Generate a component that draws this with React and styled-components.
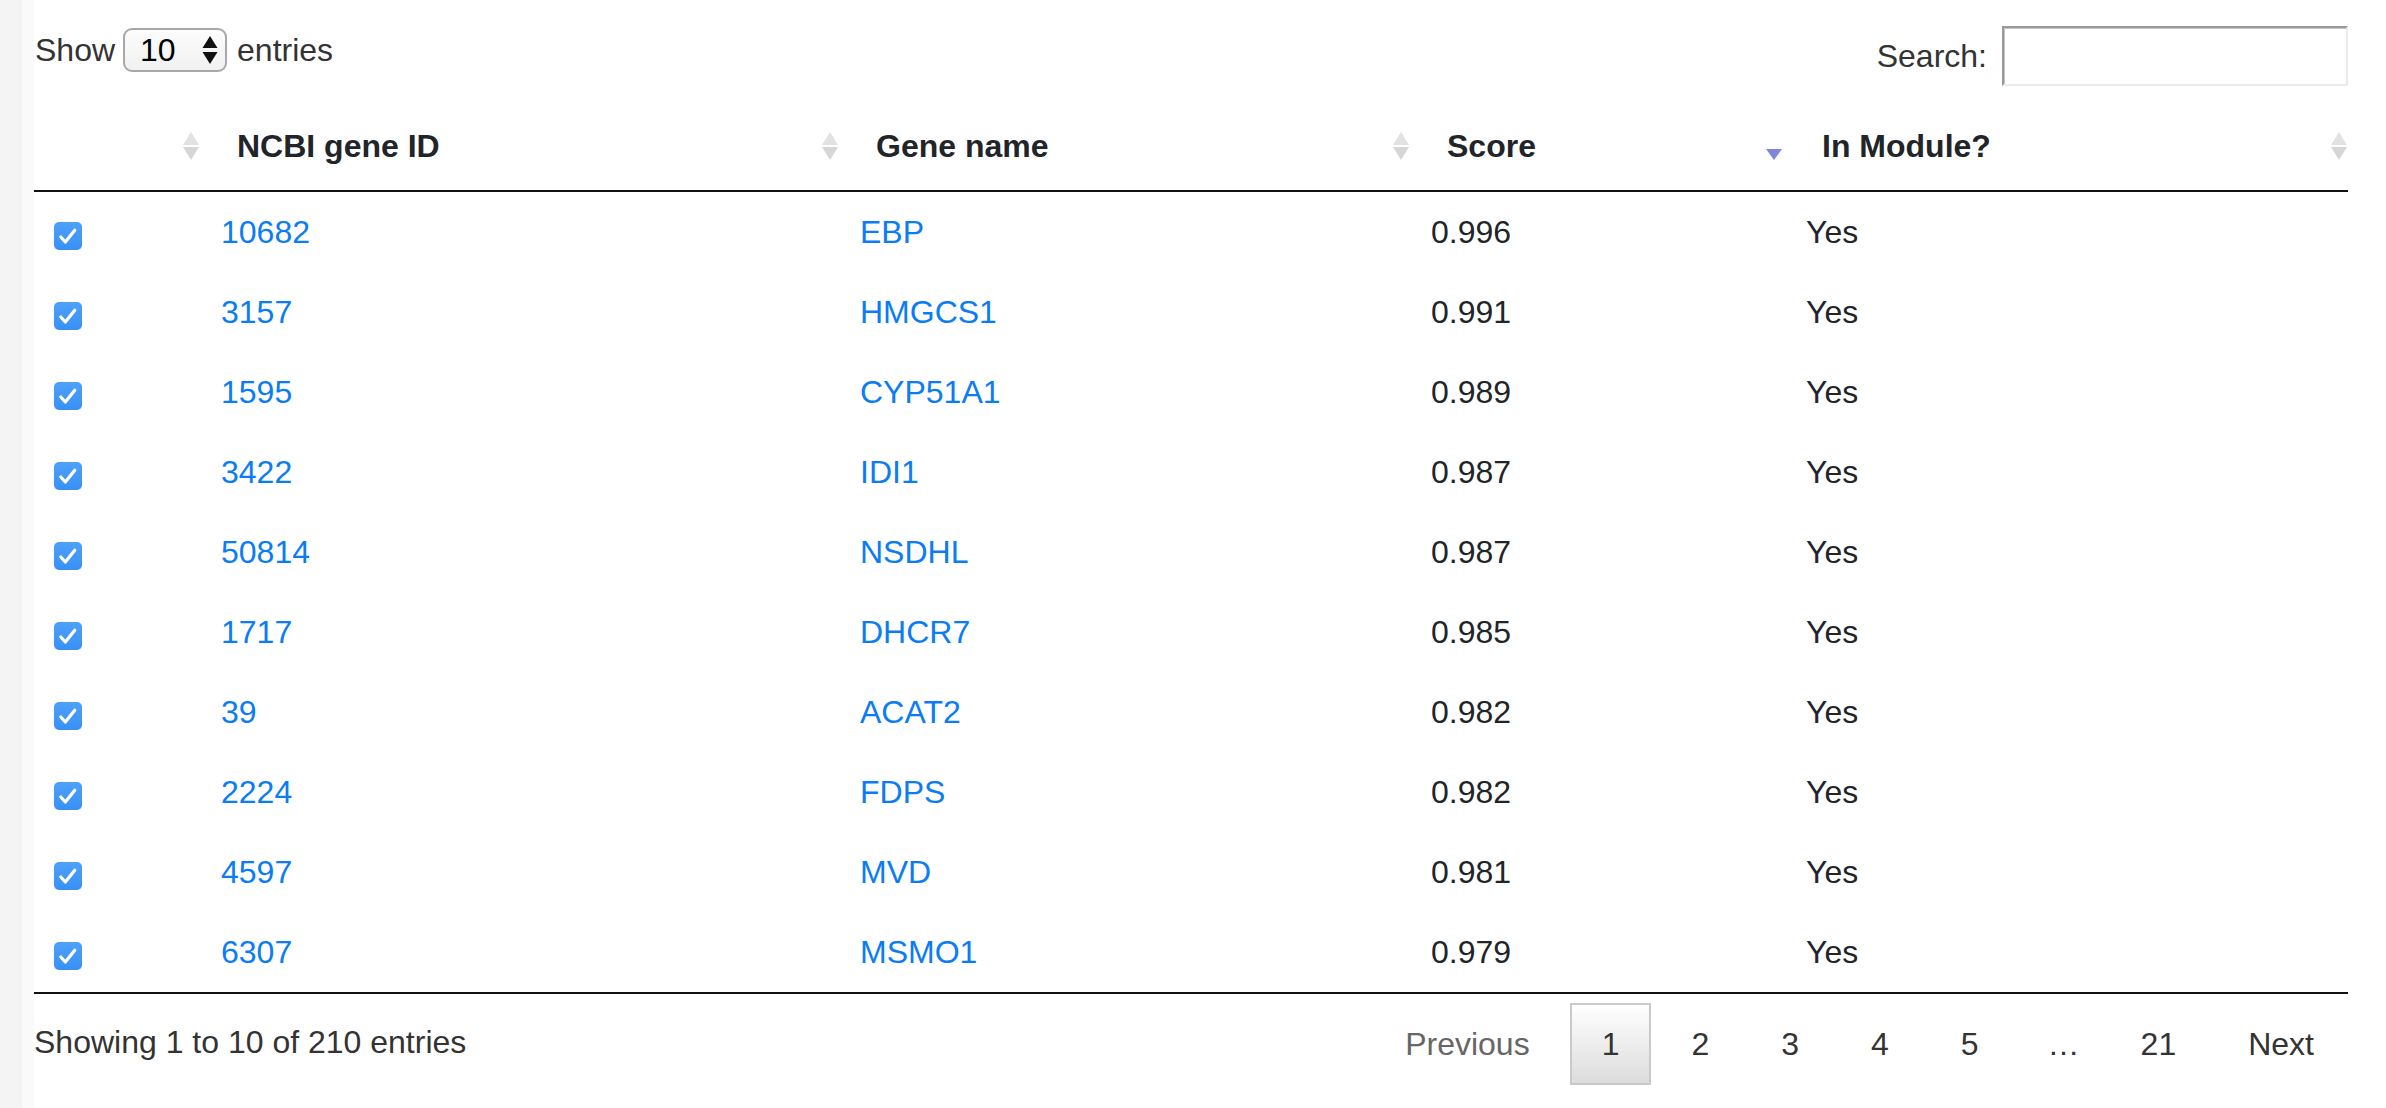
import React from "react";
import styled, { createGlobalStyle } from "styled-components";

const GlobalStyle = createGlobalStyle`
  html, body { margin: 0; padding: 0; background: #fff; }
  body { font-family: "Liberation Sans", Arial, sans-serif; }
`;

const Page = styled.div`
  display: flex;
  min-height: 1108px;
  width: 2386px;
  background: #fff;
`;

const Gutter = styled.div`
  flex: 0 0 34px;
  background: linear-gradient(to right, #f4f4f4 0, #f4f4f4 22px, #fafafa 22px, #fafafa 34px);
`;

const Content = styled.div`
  flex: 1;
  padding: 26px 38px 0 0;
  font-size: 32px;
  line-height: 48px;
  color: #333;
`;

const TopBar = styled.div`
  display: flex;
  justify-content: space-between;
  align-items: flex-start;
  height: 60px;
  margin-bottom: 16px;
`;

const LengthControl = styled.label`
  display: flex;
  align-items: center;
  height: 48px;
  padding-left: 1px;
  gap: 8px;
`;

const SelectBox = styled.div`
  box-sizing: border-box;
  display: flex;
  align-items: center;
  justify-content: space-between;
  width: 104px;
  height: 44px;
  margin-right: 2px;
  padding: 0 7px 0 15px;
  border: 2px solid #a8a8a8;
  border-radius: 9px;
  background: linear-gradient(#fcfcfc, #f1f1f1);
  color: #000;
  font-size: 32px;
`;

const FilterControl = styled.label`
  display: flex;
  align-items: center;
  height: 60px;
  gap: 15px;
`;

const SearchInput = styled.input`
  box-sizing: border-box;
  width: 346px;
  height: 60px;
  margin: 0;
  border: 2px solid;
  border-color: #9a9a9a #ebebeb #ebebeb #9a9a9a;
  box-shadow: inset 1px 1px 0 #c4c4c4;
  background: #fff;
  font-size: 32px;
  font-family: inherit;
  outline: none;
`;

const Table = styled.table`
  width: 2314px;
  table-layout: fixed;
  border-collapse: separate;
  border-spacing: 0;
  color: #212529;
  border-bottom: 2px solid #111;
`;

const HeadCell = styled.th`
  padding: 20px ${(p) => p.$padRight}px 20px 36px;
  border-bottom: 2px solid #111;
  text-align: left;
  font-weight: bold;
  font-size: 32px;
  line-height: 48px;
  color: #212529;
`;

const HeadInner = styled.div`
  display: flex;
  align-items: center;
  height: 48px;
`;

const HeadLabel = styled.span`
  flex: 1;
  white-space: nowrap;
`;

const SortIcon = styled.svg`
  flex: 0 0 auto;
  display: block;
`;

const Cell = styled.td`
  padding: 16px 20px;
  font-size: 32px;
  line-height: 48px;
  color: #212529;
  white-space: nowrap;
`;

const CheckWrap = styled.div`
  display: flex;
  align-items: center;
  height: 48px;
`;

const CheckSvg = styled.svg`
  display: block;
  margin-top: 8px;
`;

const Link = styled.a`
  color: #0a7cf6;
  text-decoration: none;
`;

const BottomBar = styled.div`
  display: flex;
  justify-content: space-between;
  align-items: flex-start;
`;

const Info = styled.div`
  padding-top: 24px;
  line-height: 48px;
  color: #333;
`;

const Paginate = styled.div`
  display: flex;
  align-items: flex-start;
  padding-top: 9px;
  margin-right: 2px;
`;

const PageButton = styled.a`
  box-sizing: border-box;
  display: block;
  padding: 15px 30px;
  margin-left: ${(p) => (p.$afterEllipsis ? 0 : 8)}px;
  border: 2px solid ${(p) => (p.$current ? "#cacaca" : "transparent")};
  background: ${(p) => (p.$current ? "linear-gradient(to bottom, #ffffff 0%, #dcdcdc 100%)" : "transparent")};
  color: ${(p) => (p.$disabled ? "#666" : "#333")};
  line-height: 48px;
  cursor: pointer;
`;

const Ellipsis = styled.span`
  display: block;
  padding: 17px 29px 17px 37px;
  line-height: 48px;
  color: #333;
`;

function SortBoth() {
  return (
    <SortIcon width="18" height="30" viewBox="0 0 18 30">
      <polygon points="9,1 17,14 1,14" fill="#e2e2e2" />
      <polygon points="1,16 17,16 9,29" fill="#d6d6d6" />
    </SortIcon>
  );
}

function SortDesc() {
  return (
    <SortIcon width="18" height="30" viewBox="0 0 18 30">
      <polygon points="1,18 17,18 9,29" fill="#7f86dc" />
    </SortIcon>
  );
}

function Check() {
  return (
    <CheckSvg width="28" height="28" viewBox="0 0 28 28">
      <defs>
        <linearGradient id="cbg" x1="0" y1="0" x2="0" y2="1">
          <stop offset="0" stopColor="#4ea1fa" />
          <stop offset="1" stopColor="#3990f4" />
        </linearGradient>
      </defs>
      <rect x="0" y="0" width="28" height="28" rx="5" fill="url(#cbg)" />
      <path d="M6.8 15 L11.3 20 L20.8 8.2" fill="none" stroke="#fff" strokeWidth="3.2" strokeLinecap="round" strokeLinejoin="round" />
    </CheckSvg>
  );
}

const columns = [
  { label: "", width: 167, sort: "both", padRight: 1 },
  { label: "NCBI gene ID", width: 639, sort: "both", padRight: 1 },
  { label: "Gene name", width: 571, sort: "both", padRight: 1 },
  { label: "Score", width: 375, sort: "desc", padRight: 3 },
  { label: "In Module?", width: 562, sort: "both", padRight: 0 },
];

const rows = [
  ["10682", "EBP", "0.996"],
  ["3157", "HMGCS1", "0.991"],
  ["1595", "CYP51A1", "0.989"],
  ["3422", "IDI1", "0.987"],
  ["50814", "NSDHL", "0.987"],
  ["1717", "DHCR7", "0.985"],
  ["39", "ACAT2", "0.982"],
  ["2224", "FDPS", "0.982"],
  ["4597", "MVD", "0.981"],
  ["6307", "MSMO1", "0.979"],
];

export default function App() {
  return (
    <>
      <GlobalStyle />
      <Page>
        <Gutter />
        <Content>
          <TopBar>
            <LengthControl>
              <span>Show</span>
              <SelectBox>
                <span>10</span>
                <svg width="16" height="28" viewBox="0 0 16 28">
                  <polygon points="8,0 15.5,12 0.5,12" fill="#111" />
                  <polygon points="0.5,16 15.5,16 8,28" fill="#111" />
                </svg>
              </SelectBox>
              <span>entries</span>
            </LengthControl>
            <FilterControl>
              <span>Search:</span>
              <SearchInput type="search" />
            </FilterControl>
          </TopBar>

          <Table>
            <colgroup>
              {columns.map((c, i) => (
                <col key={i} style={{ width: c.width }} />
              ))}
            </colgroup>
            <thead>
              <tr>
                {columns.map((c, i) => (
                  <HeadCell key={i} $padRight={c.padRight}>
                    <HeadInner>
                      <HeadLabel>{c.label}</HeadLabel>
                      {c.sort === "desc" ? <SortDesc /> : <SortBoth />}
                    </HeadInner>
                  </HeadCell>
                ))}
              </tr>
            </thead>
            <tbody>
              {rows.map(([id, name, score]) => (
                <tr key={id}>
                  <Cell>
                    <CheckWrap>
                      <Check />
                    </CheckWrap>
                  </Cell>
                  <Cell>
                    <Link href="#">{id}</Link>
                  </Cell>
                  <Cell>
                    <Link href="#">{name}</Link>
                  </Cell>
                  <Cell>{score}</Cell>
                  <Cell>Yes</Cell>
                </tr>
              ))}
            </tbody>
          </Table>

          <BottomBar>
            <Info>Showing 1 to 10 of 210 entries</Info>
            <Paginate>
              <PageButton $disabled>Previous</PageButton>
              <PageButton $current>1</PageButton>
              <PageButton>2</PageButton>
              <PageButton>3</PageButton>
              <PageButton>4</PageButton>
              <PageButton>5</PageButton>
              <Ellipsis>…</Ellipsis>
              <PageButton $afterEllipsis>21</PageButton>
              <PageButton>Next</PageButton>
            </Paginate>
          </BottomBar>
        </Content>
      </Page>
    </>
  );
}
